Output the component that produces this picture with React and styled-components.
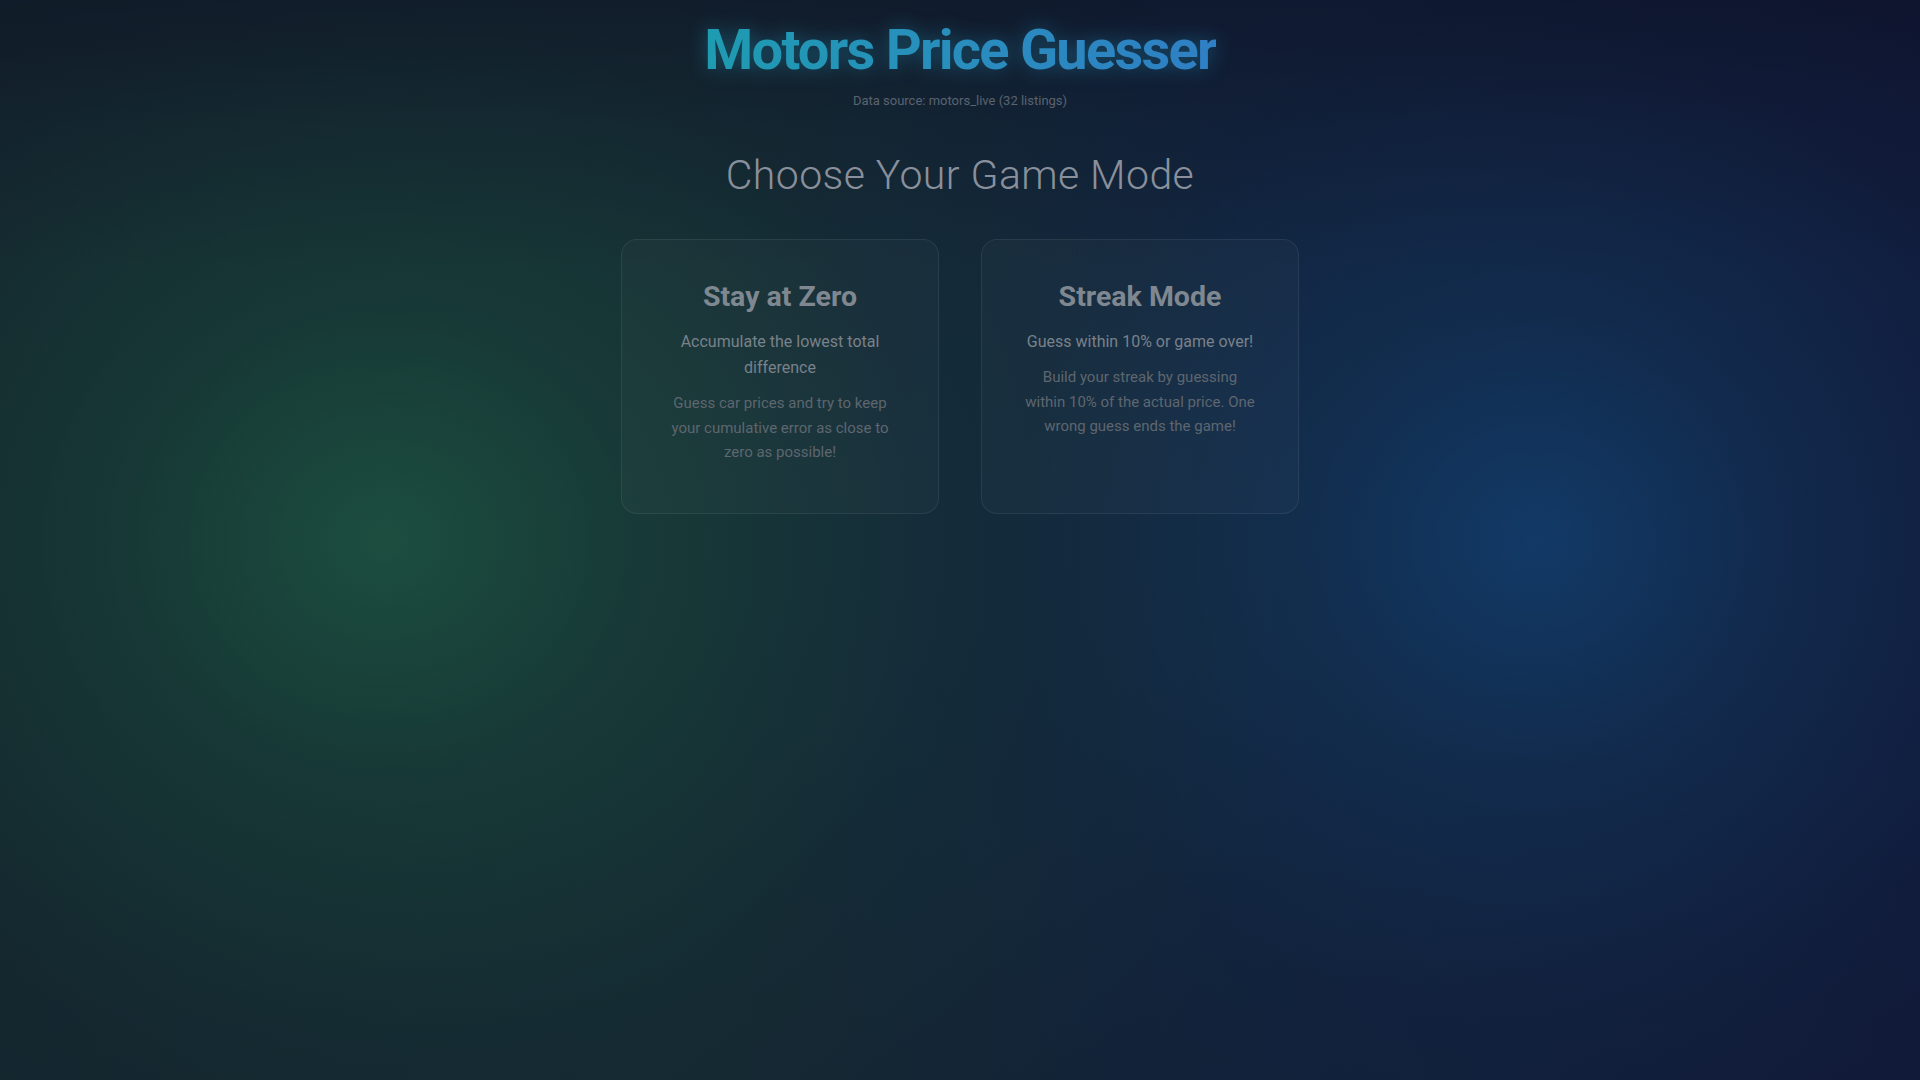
import React from "react";
import styled, { createGlobalStyle } from "styled-components";

const GlobalStyle = createGlobalStyle`
  html, body { margin: 0; padding: 0; }
  body {
    font-family: Roboto, "Noto Sans", "Liberation Sans", sans-serif;
    background: #111a2c;
  }
  * { box-sizing: border-box; }
`;

const Page = styled.div`
  min-height: 100vh;
  width: 100%;
  display: flex;
  flex-direction: column;
  align-items: center;
  background:
    linear-gradient(180deg, rgba(12, 14, 34, 0.45) 0%, rgba(12, 14, 34, 0.15) 12%, rgba(12, 14, 34, 0) 25%),
    radial-gradient(ellipse 50% 80% at 20% 50%, rgba(30, 90, 68, 0.78) 0%, rgba(26, 78, 62, 0.5) 28%, rgba(24, 64, 60, 0.25) 60%, rgba(20, 50, 55, 0) 100%),
    radial-gradient(ellipse 45% 75% at 80% 50%, rgba(18, 66, 116, 0.78) 0%, rgba(18, 58, 100, 0.5) 28%, rgba(16, 46, 86, 0.22) 60%, rgba(16, 40, 80, 0) 100%),
    linear-gradient(90deg, #13202b 0%, #142430 35%, #122036 65%, #111735 100%);
`;

const Header = styled.header`
  display: flex;
  flex-direction: column;
  align-items: center;
  padding-top: 14px;
`;

const Title = styled.h1`
  margin: 0;
  font-family: Roboto, "Liberation Sans", sans-serif;
  font-weight: 700;
  font-size: 56px;
  line-height: 72px;
  letter-spacing: -1.75px;
  background: linear-gradient(90deg, #1e9bb1 0%, #2a8cbe 55%, #2f7fc4 100%);
  -webkit-background-clip: text;
  background-clip: text;
  color: transparent;
  filter: drop-shadow(0 0 10px rgba(35, 150, 190, 0.45));
`;

const Source = styled.p`
  margin: 6px 0 0;
  font-size: 13px;
  line-height: 18px;
  color: #5b6370;
`;

const Heading = styled.h2`
  margin: 41px 0 0;
  font-weight: 300;
  font-size: 41px;
  line-height: 48px;
  letter-spacing: 0.42px;
  color: #8a909b;
`;

const Grid = styled.div`
  display: grid;
  grid-template-columns: repeat(2, 318px);
  gap: 42px;
  margin-top: 40px;
`;

const Card = styled.button`
  display: flex;
  flex-direction: column;
  align-items: center;
  text-align: center;
  padding: 40px 40px 48px;
  min-height: 275px;
  border-radius: 16px;
  border: 1px solid rgba(255, 255, 255, 0.07);
  background: rgba(255, 255, 255, 0.025);
  font-family: inherit;
  cursor: pointer;
`;

const CardTitle = styled.h3`
  margin: 0;
  font-size: 28.5px;
  line-height: 34px;
  font-weight: 700;
  color: #7f8890;
`;

const CardTag = styled.p`
  margin: 15px 0 0;
  font-size: 16px;
  line-height: 26px;
  color: #79818a;
`;

const CardText = styled.p`
  margin: 10px 0 0;
  font-size: 15px;
  line-height: 24.5px;
  color: #5e666f;
`;

const modes = [
  {
    title: "Stay at Zero",
    tag: "Accumulate the lowest total difference",
    text: "Guess car prices and try to keep your cumulative error as close to zero as possible!",
  },
  {
    title: "Streak Mode",
    tag: "Guess within 10% or game over!",
    text: "Build your streak by guessing within 10% of the actual price. One wrong guess ends the game!",
  },
];

export default function App() {
  return (
    <>
      <GlobalStyle />
      <Page>
        <Header>
          <Title>Motors Price Guesser</Title>
          <Source>Data source: motors_live (32 listings)</Source>
        </Header>
        <Heading>Choose Your Game Mode</Heading>
        <Grid>
          {modes.map((m) => (
            <Card key={m.title}>
              <CardTitle>{m.title}</CardTitle>
              <CardTag>{m.tag}</CardTag>
              <CardText>{m.text}</CardText>
            </Card>
          ))}
        </Grid>
      </Page>
    </>
  );
}
